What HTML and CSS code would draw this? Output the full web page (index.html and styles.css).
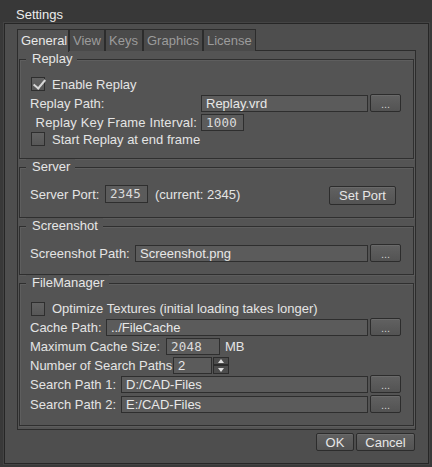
FILE: index.html
```html
<!DOCTYPE html>
<html>
<head>
<meta charset="utf-8">
<link rel="stylesheet" href="styles.css">
</head>
<body>
<div class="titlebar">Settings</div>
<div class="window">
  <div class="tabs">
    <div class="tab active t-general">General</div>
    <div class="tab t-view">View</div>
    <div class="tab t-keys">Keys</div>
    <div class="tab t-graphics">Graphics</div>
    <div class="tab t-license">License</div>
  </div>
  <div class="pane">
    <div class="group g-replay">
      <span class="legend">Replay</span>
      <div class="row h18"><span class="check checked"></span><span class="ctext">Enable Replay</span></div>
      <div class="row h20"><span class="lbl w171">Replay Path:</span><span class="input grow">Replay.vrd</span><span class="btn dots">...</span></div>
      <div class="row h18"><span class="lbl w171 right">Replay Key Frame Interval:</span><span class="input mono w43">1000</span></div>
      <div class="row h16"><span class="check"></span><span class="ctext">Start Replay at end frame</span></div>
    </div>
    <div class="group g-server">
      <span class="legend">Server</span>
      <div class="row h22"><span class="lbl w75">Server Port:</span><span class="input mono w43 tall">2345</span><span class="current">(current: 2345)</span><span class="btn setport">Set Port</span></div>
    </div>
    <div class="group g-shot">
      <span class="legend">Screenshot</span>
      <div class="row h20"><span class="lbl w105">Screenshot Path:</span><span class="input grow">Screenshot.png</span><span class="btn dots">...</span></div>
    </div>
    <div class="group g-fm">
      <span class="legend">FileManager</span>
      <div class="row h17"><span class="check"></span><span class="ctext">Optimize Textures (initial loading takes longer)</span></div>
      <div class="row h20"><span class="lbl w76">Cache Path:</span><span class="input grow">../FileCache</span><span class="btn dots">...</span></div>
      <div class="row h19"><span class="lbl w136">Maximum Cache Size:</span><span class="input mono w54">2048</span><span class="unit">MB</span></div>
      <div class="row h18"><span class="lbl w143">Number of Search Paths</span><span class="input w39">2</span><span class="spin"><span class="up"></span><span class="down"></span></span></div>
      <div class="row h20"><span class="lbl w91">Search Path 1:</span><span class="input grow">D:/CAD-Files</span><span class="btn dots">...</span></div>
      <div class="row h20"><span class="lbl w91">Search Path 2:</span><span class="input grow">E:/CAD-Files</span><span class="btn dots">...</span></div>
    </div>
  </div>
  <div class="actions">
    <span class="btn ok">OK</span>
    <span class="btn cancel">Cancel</span>
  </div>
</div>
</body>
</html>
```
FILE: styles.css
```css
* { box-sizing: border-box; }
html, body { margin: 0; padding: 0; }
body {
  width: 432px;
  height: 467px;
  background: #393939;
  font-family: "Liberation Sans", Arial, sans-serif;
  font-size: 13px;
  color: #e4e4e4;
  overflow: hidden;
}
.titlebar {
  height: 23px;
  line-height: 30px;
  padding-left: 16px;
  font-size: 13px;
  color: #ececec;
  background: #383838;
  overflow: visible;
}
.window {
  margin-left: 4px;
  width: 425px;
  height: 441px;
  border: 1px solid #262626;
  background: #4e4e4e;
  padding: 5px 12px 0 12px;
  box-shadow: 0 0 0 1px #444;
}
.tabs {
  display: flex;
  height: 22px;
  position: relative;
  z-index: 1;
}
.tab {
  height: 22px;
  line-height: 21px;
  padding: 0 0 0 3px;
  border: 1px solid #2c2c2c;
  border-bottom: none;
  background: #4a4a4a;
  color: #9c9c9c;
  white-space: nowrap;
  overflow: hidden;
  flex: none;
}
.t-general { width: 52px; }
.t-view { width: 36px; margin-left: 0; }
.t-keys { width: 38px; }
.t-graphics { width: 60px; }
.t-license { width: 53px; }
.tab.active {
  background: #545454;
  color: #e8e8e8;
  height: 23px;
}
.pane {
  width: 399px;
  height: 380px;
  margin-top: -1px;
  border: 1px solid #2c2c2c;
  background: #545454;
  padding: 8px 1px 3px 1px;
  display: flex;
  flex-direction: column;
  gap: 8px;
}
.group {
  position: relative;
  border: 1px solid #2f2f2f;
  box-shadow: inset 1px 1px 0 #5e5e5e, 1px 1px 0 #5c5c5c;
  padding: 0 12px 0 10px;
  display: flex;
  flex-direction: column;
}
.legend {
  position: absolute;
  top: -9px;
  left: 6px;
  padding: 0 5px 0 6px;
  background: #545454;
  line-height: 16px;
  color: #e6e6e6;
}
.g-replay { height: 100px; padding-top: 15px; }
.g-server { height: 51px; padding-top: 15px; }
.g-shot { height: 49px; padding-top: 16px; }
.g-fm { height: 143px; padding-top: 16px; }

.row { display: flex; align-items: center; }
.h16 { height: 16px; }
.h17 { height: 17px; }
.h18 { height: 18px; }
.h19 { height: 19px; }
.h20 { height: 20px; }
.h22 { height: 22px; }

.lbl { white-space: nowrap; flex: none; }
.right { text-align: right; padding-right: 4px; letter-spacing: 0.15px; }
.w171 { width: 171px; }
.w75 { width: 75px; }
.w105 { width: 105px; }
.w76 { width: 76px; }
.w136 { width: 136px; }
.w143 { width: 143px; }
.w91 { width: 91px; }

.input {
  height: 17px;
  line-height: 15px;
  background: #5b5b5b;
  border: 1px solid #2e2e2e;
  padding-left: 4px;
  color: #e8e8e8;
  white-space: nowrap;
  overflow: hidden;
  flex: none;
}
.input.grow { width: 168px; flex: 1 1 auto; }
.input.tall { height: 18px; line-height: 16px; }
.mono { font-family: "DejaVu Sans Mono", "Liberation Mono", monospace; font-size: 12.5px; letter-spacing: 0.2px; color: #dcdcdc; }
.w43 { width: 43px; }
.w54 { width: 54px; }
.w39 { width: 39px; }

.btn {
  display: inline-flex;
  align-items: center;
  justify-content: center;
  border: 1px solid #2c2c2c;
  border-radius: 2px;
  background: linear-gradient(#616161, #535353);
  box-shadow: inset 0 1px 0 #6a6a6a;
  color: #e6e6e6;
  flex: none;
}
.dots {
  width: 31px;
  height: 18px;
  margin-left: 2px;
  font-size: 11px;
  line-height: 1;
  padding-top: 3px;
  color: #d0d0d0;
}
.current { margin-left: 7px; }
.setport {
  width: 67px;
  height: 19px;
  margin-left: auto;
  margin-right: 5px;
  margin-top: 3px;
}
.unit { margin-left: 5px; }

.check {
  width: 14px;
  height: 14px;
  margin-left: 1px;
  border: 1px solid #2e2e2e;
  background: linear-gradient(#626262, #575757);
  flex: none;
  position: relative;
}
.check.checked::after {
  content: "";
  position: absolute;
  left: 4px;
  top: -1px;
  width: 5px;
  height: 10px;
  border-right: 2px solid #d8d8d8;
  border-bottom: 2px solid #d8d8d8;
  transform: rotate(40deg);
}
.ctext { margin-left: 7px; white-space: nowrap; }

.spin {
  display: flex;
  flex-direction: column;
  width: 16px;
  height: 17px;
  margin-left: 1px;
  flex: none;
}
.spin .up, .spin .down {
  flex: 1;
  border: 1px solid #2c2c2c;
  background: #4c4c4c;
  position: relative;
}
.spin .up::after, .spin .down::after {
  content: "";
  position: absolute;
  left: 4px;
  width: 0;
  height: 0;
  border-left: 3px solid transparent;
  border-right: 3px solid transparent;
}
.spin .up::after { top: 1px; border-bottom: 4px solid #e0e0e0; }
.spin .down::after { top: 2px; border-top: 4px solid #e0e0e0; }

.actions {
  display: flex;
  justify-content: flex-end;
  gap: 2px;
  padding-right: 1px;
  margin-top: 3px;
}
.ok { width: 38px; height: 18px; }
.cancel { width: 59px; height: 18px; }
```
